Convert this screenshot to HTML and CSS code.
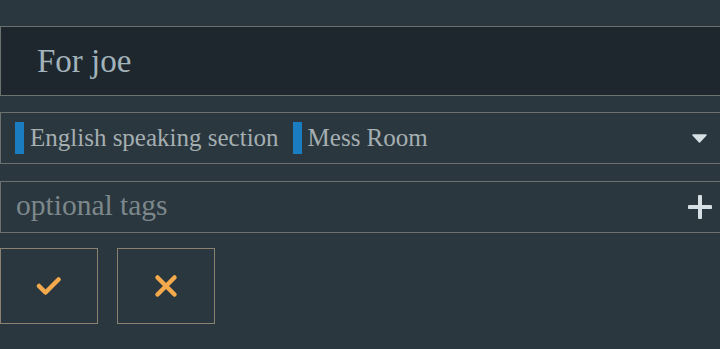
FILE: index.html
```html
<!DOCTYPE html>
<html>
<head>
<meta charset="utf-8">
<link rel="stylesheet" href="styles.css">
</head>
<body>
<div class="form">
  <div class="title-input">For joe</div>
  <div class="select">
    <div class="tags">
      <span class="tag"><span class="bar"></span>English speaking section</span>
      <span class="tag"><span class="bar"></span>Mess Room</span>
    </div>
    <svg class="caret" width="15" height="9" viewBox="0 0 15 9"><path d="M1 1 L14 1 L7.5 8 Z" fill="#d5dfe4" stroke="#d5dfe4" stroke-width="1.5" stroke-linejoin="round"/></svg>
  </div>
  <div class="tag-input">
    <span class="placeholder">optional tags</span>
    <svg class="plus" width="24" height="24" viewBox="0 0 24 24"><path d="M12 1.5 V22.5 M1.5 12 H22.5" stroke="#d5dfe4" stroke-width="4" stroke-linecap="round" fill="none"/></svg>
  </div>
  <div class="buttons">
    <button class="btn"><svg width="26" height="20" viewBox="0 0 26 20"><path d="M3 10 L9.5 16.5 L22.5 3.5" stroke="#f4aa4c" stroke-width="4.5" stroke-linecap="round" stroke-linejoin="round" fill="none"/></svg></button>
    <button class="btn"><svg width="24" height="24" viewBox="0 0 24 24"><path d="M3.5 3.5 L20.5 20.5 M20.5 3.5 L3.5 20.5" stroke="#f4aa4c" stroke-width="4.5" stroke-linecap="round" fill="none"/></svg></button>
  </div>
</div>
</body>
</html>
```
FILE: styles.css
```css
html, body {
  margin: 0;
  padding: 0;
  background: #2a373e;
  overflow: hidden;
  width: 720px;
  height: 349px;
}
.form {
  width: 730px;
  padding-top: 26px;
  display: flex;
  flex-direction: column;
  font-family: "Liberation Serif", serif;
}
.title-input {
  box-sizing: border-box;
  height: 70px;
  border: 1px solid #6a716f;
  background: #1d272d;
  color: #a3b3bb;
  font-size: 33px;
  padding-left: 36px;
  padding-top: 1px;
  display: flex;
  align-items: center;
}
.select {
  box-sizing: border-box;
  margin-top: 16px;
  width: 720px;
  height: 52px;
  border: 1px solid #6a716f;
  border-right: none;
  display: flex;
  align-items: center;
  justify-content: space-between;
  padding-left: 14px;
  padding-right: 13px;
}
.tags {
  display: flex;
  gap: 14px;
}
.tag {
  display: flex;
  align-items: center;
  gap: 6px;
  color: #a5aeb1;
  font-size: 25px;
}
.bar {
  width: 9px;
  height: 32px;
  background: #1a7cc1;
}
.tag-input {
  box-sizing: border-box;
  margin-top: 17px;
  width: 720px;
  height: 52px;
  border: 1px solid #6a716f;
  border-right: none;
  display: flex;
  align-items: center;
  justify-content: space-between;
  padding-left: 15px;
  padding-right: 8px;
}
.placeholder {
  color: #7d888c;
  font-size: 29.5px;
  margin-bottom: 4px;
}
.buttons {
  margin-top: 15px;
  display: flex;
  gap: 19px;
}
.btn {
  box-sizing: border-box;
  width: 98px;
  height: 76px;
  border: 1px solid #8a8170;
  background: transparent;
  padding: 0;
  display: flex;
  align-items: center;
  justify-content: center;
}
```
